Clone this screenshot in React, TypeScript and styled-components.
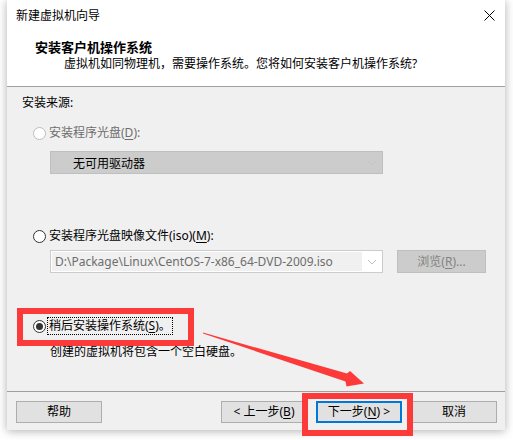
import styled, { createGlobalStyle } from "styled-components";

const GlobalStyle = createGlobalStyle`
  html, body {
    margin: 0;
    padding: 0;
    background: #ffffff;
  }
  body {
    font-family: "Noto Sans", "Noto Sans CJK SC", sans-serif;
    font-size: 12px;
    color: #000;
  }
`;

const Stage = styled.div`
  position: relative;
  width: 513px;
  height: 440px;
  overflow: hidden;
  background: #fff;
`;

const Window = styled.div`
  margin-left: 7px;
  width: 498px;
  height: 430px;
  display: flex;
  flex-direction: column;
  background: #f0f0f0;
  box-shadow: 0 1px 9px rgba(0, 0, 0, 0.32);
`;

const TitleBar = styled.div`
  height: 30px;
  flex: none;
  display: flex;
  align-items: center;
  justify-content: space-between;
  padding: 0 10px 0 9px;
  background: #fff;
  font-size: 12px;
`;

const Header = styled.div`
  height: 57px;
  flex: none;
  box-sizing: border-box;
  padding: 9px 0 0 28px;
  background: #fff;
  border-bottom: 1px solid #a0a0a0;
`;

const HeaderTitle = styled.div`
  font-size: 13px;
  font-weight: 700;
  line-height: 17px;
`;

const HeaderText = styled.div`
  line-height: 16px;
  padding-left: 29px;
`;

const Body = styled.div`
  height: 304px;
  flex: none;
  box-sizing: border-box;
  padding: 8px 0 0 15px;
  display: flex;
  flex-direction: column;
  align-items: flex-start;
`;

const Line = styled.div<{ $top?: number; $indent?: number; $muted?: boolean }>`
  line-height: 16px;
  margin-top: ${(p) => p.$top ?? 0}px;
  margin-left: ${(p) => p.$indent ?? 0}px;
  color: ${(p) => (p.$muted ? "#6d6d6d" : "#000")};
`;

const RadioRow = styled.div<{ $top: number; $disabled?: boolean }>`
  display: flex;
  align-items: center;
  height: 16px;
  margin-top: ${(p) => p.$top}px;
  margin-left: 11px;
  color: ${(p) => (p.$disabled ? "#6d6d6d" : "#000")};
`;

const Radio = styled.span<{ $checked?: boolean; $disabled?: boolean }>`
  position: relative;
  width: 13px;
  height: 13px;
  box-sizing: border-box;
  border-radius: 50%;
  border: 1px solid ${(p) => (p.$disabled ? "#bcbcbc" : "#333")};
  background: #fff;
  margin-right: 2px;
  flex: none;

  &::after {
    content: "";
    display: ${(p) => (p.$checked ? "block" : "none")};
    position: absolute;
    left: 2px;
    top: 2px;
    width: 7px;
    height: 7px;
    border-radius: 50%;
    background: #333;
  }
`;

const RadioLabel = styled.span<{ $focus?: boolean }>`
  line-height: 16px;
  padding: 0 1px;
  outline: ${(p) => (p.$focus ? "1px dotted #000" : "none")};
`;

const Key = styled.span`
  text-decoration: underline;
  text-underline-offset: 2px;
`;

const Select = styled.div<{ $top: number; $filled?: boolean }>`
  display: flex;
  align-items: center;
  width: 333px;
  height: 23px;
  box-sizing: border-box;
  margin-top: ${(p) => p.$top}px;
  border: 1px solid ${(p) => (p.$filled ? "#bfbfbf" : "#cccccc")};
  background: ${(p) => (p.$filled ? "#cccccc" : "#ffffff")};
`;

const SelectValue = styled.div<{ $muted?: boolean }>`
  flex: 1;
  align-self: stretch;
  display: flex;
  align-items: center;
  margin: 1px 0 1px 1px;
  padding-left: ${(p) => (p.$muted ? 3 : 21)}px;
  background: ${(p) => (p.$muted ? "#f0f0f0" : "transparent")};
  color: ${(p) => (p.$muted ? "#6d6d6d" : "#000")};
  white-space: nowrap;
`;

const Chevron = styled.div`
  width: 20px;
  flex: none;
  display: flex;
  align-items: center;
  justify-content: center;
`;

const FileRow = styled.div`
  display: flex;
  align-items: center;
  gap: 14px;
  margin-top: 6px;
  margin-left: 28px;
`;

const Button = styled.button<{ $focus?: boolean; $disabled?: boolean }>`
  width: 86px;
  height: 22px;
  box-sizing: border-box;
  padding: 0;
  font: inherit;
  font-size: 12px;
  line-height: 16px;
  cursor: default;
  color: ${(p) => (p.$disabled ? "#838383" : "#000")};
  background: ${(p) => (p.$disabled ? "#cccccc" : "#e1e1e1")};
  border: ${(p) =>
    p.$focus ? "2px solid #0078d7" : p.$disabled ? "1px solid #bfbfbf" : "1px solid #adadad"};
`;

const BrowseButton = styled(Button)`
  width: 89px;
  height: 23px;
`;

const Footer = styled.div`
  flex: 1;
  display: flex;
  align-items: flex-start;
  justify-content: space-between;
  padding: 9px 8px 0 9px;
  border-top: 1px solid #a0a0a0;
`;

const ButtonGroup = styled.div`
  display: flex;
  gap: 9px;
`;

const Highlight = styled.div<{ $x: number; $y: number; $w: number; $h: number }>`
  position: absolute;
  left: ${(p) => p.$x}px;
  top: ${(p) => p.$y}px;
  width: ${(p) => p.$w}px;
  height: ${(p) => p.$h}px;
  box-sizing: border-box;
  border: 6px solid #fd3a3a;
  pointer-events: none;
`;

const ArrowLayer = styled.svg`
  position: absolute;
  left: 0;
  top: 0;
  pointer-events: none;
`;

const ChevronIcon = () => (
  <svg width="10" height="6" viewBox="0 0 10 6">
    <path d="M1 1 L5 5 L9 1" fill="none" stroke="#c4c4c4" strokeWidth="1" />
  </svg>
);

const CloseIcon = () => (
  <svg width="11" height="11" viewBox="0 0 11 11">
    <path d="M0.5 0.5 L10.5 10.5 M10.5 0.5 L0.5 10.5" stroke="#000" strokeWidth="1" />
  </svg>
);

const App = () => {
  return (
    <Stage>
      <GlobalStyle />
      <Window>
        <TitleBar>
          <span>新建虚拟机向导</span>
          <CloseIcon />
        </TitleBar>
        <Header>
          <HeaderTitle>安装客户机操作系统</HeaderTitle>
          <HeaderText>虚拟机如同物理机，需要操作系统。您将如何安装客户机操作系统?</HeaderText>
        </Header>
        <Body>
          <Line>安装来源:</Line>
          <RadioRow $top={14} $disabled>
            <Radio $disabled />
            <RadioLabel>
              安装程序光盘(<Key>D</Key>):
            </RadioLabel>
          </RadioRow>
          <Select $top={10} $filled style={{ marginLeft: 28 }}>
            <SelectValue>无可用驱动器</SelectValue>
            <Chevron>
              <ChevronIcon />
            </Chevron>
          </Select>
          <RadioRow $top={54}>
            <Radio />
            <RadioLabel>
              安装程序光盘映像文件(iso)(<Key>M</Key>):
            </RadioLabel>
          </RadioRow>
          <FileRow>
            <Select $top={0}>
              <SelectValue $muted>D:\Package\Linux\CentOS-7-x86_64-DVD-2009.iso</SelectValue>
              <Chevron>
                <ChevronIcon />
              </Chevron>
            </Select>
            <BrowseButton $disabled>
              浏览(<Key>R</Key>)...
            </BrowseButton>
          </FileRow>
          <RadioRow $top={45}>
            <Radio $checked />
            <RadioLabel $focus>
              稍后安装操作系统(<Key>S</Key>)。
            </RadioLabel>
          </RadioRow>
          <Line $top={10} $indent={28}>
            创建的虚拟机将包含一个空白硬盘。
          </Line>
        </Body>
        <Footer>
          <Button>帮助</Button>
          <ButtonGroup>
            <Button>
              &lt; 上一步(<Key>B</Key>)
            </Button>
            <Button $focus>
              下一步(<Key>N</Key>) &gt;
            </Button>
            <Button>取消</Button>
          </ButtonGroup>
        </Footer>
      </Window>

      <Highlight $x={17} $y={308} $w={177} $h={38} />
      <Highlight $x={302} $y={393} $w={111} $h={43} />
      <ArrowLayer width="513" height="440" viewBox="0 0 513 440">
        <polygon
          fill="#fd3a3a"
          points="203,332.6 347,373.6 350,371 364,383.5 346.5,386.5 345.5,381.6 203,333.4"
        />
      </ArrowLayer>
    </Stage>
  );
};

export default App;
